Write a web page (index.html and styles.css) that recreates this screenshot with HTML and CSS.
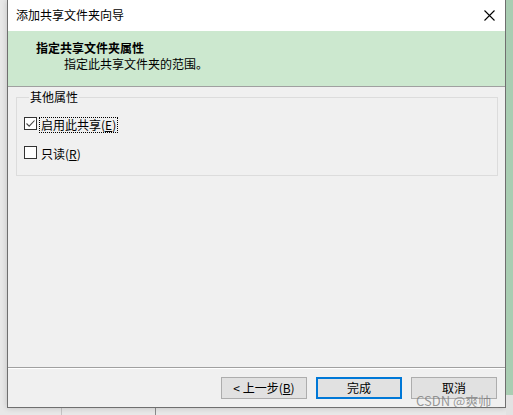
FILE: index.html
```html
<!DOCTYPE html>
<html lang="zh-CN">
<head>
<meta charset="utf-8">
<title>添加共享文件夹向导</title>
<link rel="stylesheet" href="styles.css">
</head>
<body>
<div class="screen">
  <div class="window">
    <div class="titlebar">
      <span class="title">添加共享文件夹向导</span>
      <svg class="close" width="11" height="11" viewBox="0 0 11 11"><path d="M0.5 0.5L10.5 10.5M10.5 0.5L0.5 10.5" stroke="#000" stroke-width="1.1" fill="none"/></svg>
    </div>
    <div class="header">
      <div class="h-title">指定共享文件夹属性</div>
      <div class="h-sub">指定此共享文件夹的范围。</div>
    </div>
    <div class="content">
      <fieldset class="group">
        <legend class="legend">其他属性</legend>
        <div class="row">
          <span class="box"><svg width="11" height="11" viewBox="0 0 11 11"><path d="M1.5 5.5L4.2 8.2L9.5 2.5" stroke="#444" stroke-width="1.1" fill="none"/></svg></span>
          <span class="lbl focus">启用此共享(<u>E</u>)</span>
        </div>
        <div class="row">
          <span class="box"></span>
          <span class="lbl">只读(<u>R</u>)</span>
        </div>
      </fieldset>
    </div>
    <div class="footer">
      <button class="btn">&lt; 上一步(<u>B</u>)</button>
      <button class="btn default">完成</button>
      <button class="btn">取消</button>
    </div>
  </div>
  <div class="strip"></div>
  <div class="watermark">CSDN @爽帅_</div>
</div>
</body>
</html>
```
FILE: styles.css
```css
html, body {
  margin: 0;
  padding: 0;
}
body {
  font-family: "Noto Sans CJK SC", "Noto Sans", sans-serif;
  font-size: 12px;
  color: #000;
}
.screen {
  position: relative;
  width: 513px;
  height: 415px;
  overflow: hidden;
  display: flex;
  background:
    linear-gradient(to right, transparent 61px, #c4c4c4 61px, #c4c4c4 62px, transparent 62px, transparent 155px, #8a8a8a 155px, #8a8a8a 156px, transparent 156px),
    #e8e8e8;
}
.window {
  margin-left: 7px;
  width: 497px;
  height: 407px;
  border: 1px solid #6f6f6f;
  border-top: none;
  background: #f0f0f0;
  display: flex;
  flex-direction: column;
  box-shadow: 0 0 6px rgba(0, 0, 0, 0.18);
}
.strip {
  flex: 1;
  background: linear-gradient(to bottom, #a9cdb2 0, #a9cdb2 395px, #e2e2e2 395px);
}
.titlebar {
  height: 31px;
  background: #fff;
  display: flex;
  align-items: center;
  justify-content: space-between;
  padding: 0 10px 0 8px;
}
.title {
  line-height: 16px;
  margin-top: -1px;
}
.close {
  display: block;
}
.header {
  background: #cce8cf;
  border-bottom: 1px solid #a0a0a0;
  padding: 9px 0 0 28px;
  box-sizing: border-box;
  height: 56px;
}
.h-title {
  font-weight: bold;
  line-height: 16px;
}
.h-sub {
  line-height: 16px;
  padding-left: 28px;
}
.content {
  flex: 1;
  padding: 2px 7px 0 8px;
}
.group {
  margin: 0;
  padding: 12px 0 13px 7px;
  border: 1px solid #dcdcdc;
  display: flex;
  flex-direction: column;
  gap: 13px;
}
.legend {
  padding: 0 1px;
  margin-left: 5px;
  line-height: 16px;
}
.row {
  display: flex;
  align-items: flex-start;
  height: 16px;
}
.box {
  width: 11px;
  height: 11px;
  border: 1px solid #333;
  background: #fff;
  margin-right: 2px;
  display: block;
}
.box svg {
  display: block;
}
.lbl {
  line-height: 14px;
  padding: 0 1px;
  border: 1px dotted transparent;
}
.lbl.focus {
  border-color: #000;
}
.footer {
  border-top: 1px solid #a0a0a0;
  box-shadow: inset 0 1px 0 #ffffff;
  display: flex;
  justify-content: flex-end;
  align-items: flex-start;
  gap: 9px;
  padding: 9px 8px 0 0;
  box-sizing: border-box;
  height: 40px;
}
.btn {
  width: 86px;
  height: 22px;
  font-family: "Noto Sans CJK SC", "Noto Sans", sans-serif;
  font-size: 12px;
  background: #e1e1e1;
  border: 1px solid #adadad;
  padding: 0;
  margin: 0;
  color: #000;
  line-height: 18px;
}
.btn.default {
  border: 2px solid #0078d7;
}
.watermark {
  position: absolute;
  left: 416px;
  top: 393px;
  font-size: 13px;
  color: rgba(120, 120, 120, 0.75);
  font-family: "Noto Sans CJK SC", "Liberation Sans", sans-serif;
  line-height: 16px;
}
```
